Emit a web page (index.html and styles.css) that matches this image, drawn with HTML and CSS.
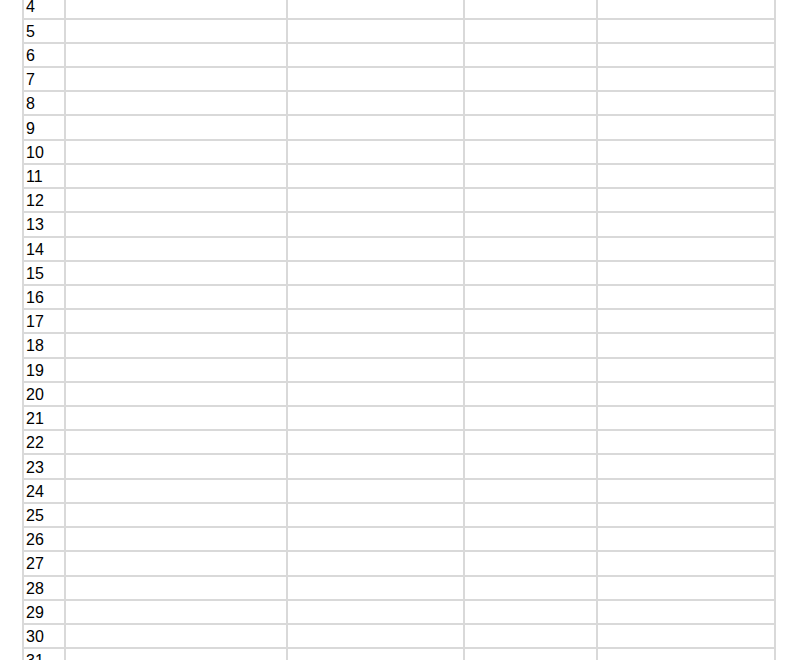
FILE: index.html
```html
<!DOCTYPE html>
<html>
<head>
<meta charset="utf-8">
<link rel="stylesheet" href="styles.css">
</head>
<body>
<div class="sheet">
<div class="n">4</div><div></div><div></div><div></div><div></div>
<div class="n">5</div><div></div><div></div><div></div><div></div>
<div class="n">6</div><div></div><div></div><div></div><div></div>
<div class="n">7</div><div></div><div></div><div></div><div></div>
<div class="n">8</div><div></div><div></div><div></div><div></div>
<div class="n">9</div><div></div><div></div><div></div><div></div>
<div class="n">10</div><div></div><div></div><div></div><div></div>
<div class="n">11</div><div></div><div></div><div></div><div></div>
<div class="n">12</div><div></div><div></div><div></div><div></div>
<div class="n">13</div><div></div><div></div><div></div><div></div>
<div class="n">14</div><div></div><div></div><div></div><div></div>
<div class="n">15</div><div></div><div></div><div></div><div></div>
<div class="n">16</div><div></div><div></div><div></div><div></div>
<div class="n">17</div><div></div><div></div><div></div><div></div>
<div class="n">18</div><div></div><div></div><div></div><div></div>
<div class="n">19</div><div></div><div></div><div></div><div></div>
<div class="n">20</div><div></div><div></div><div></div><div></div>
<div class="n">21</div><div></div><div></div><div></div><div></div>
<div class="n">22</div><div></div><div></div><div></div><div></div>
<div class="n">23</div><div></div><div></div><div></div><div></div>
<div class="n">24</div><div></div><div></div><div></div><div></div>
<div class="n">25</div><div></div><div></div><div></div><div></div>
<div class="n">26</div><div></div><div></div><div></div><div></div>
<div class="n">27</div><div></div><div></div><div></div><div></div>
<div class="n">28</div><div></div><div></div><div></div><div></div>
<div class="n">29</div><div></div><div></div><div></div><div></div>
<div class="n">30</div><div></div><div></div><div></div><div></div>
<div class="n">31</div><div></div><div></div><div></div><div></div>
</div>
</body>
</html>
```
FILE: styles.css
```css
html, body {
  margin: 0;
  padding: 0;
  background: #fff;
  overflow: hidden;
  height: 660px;
}
.sheet {
  margin: -6.7px 0 0 22px;
  width: 754px;
  display: grid;
  grid-template-columns: 40px 220px 175px 131px 176px;
  grid-auto-rows: 22.23px;
  gap: 2px;
  padding: 2px;
  box-sizing: border-box;
  background: #d9d9d9;
  font-family: "Liberation Sans", Arial, sans-serif;
  font-size: 16px;
  color: #000;
}
.sheet > div {
  background: #fff;
}
.sheet .n {
  display: flex;
  align-items: center;
  padding: 2px 0 0 2px;
  box-sizing: border-box;
}
```
